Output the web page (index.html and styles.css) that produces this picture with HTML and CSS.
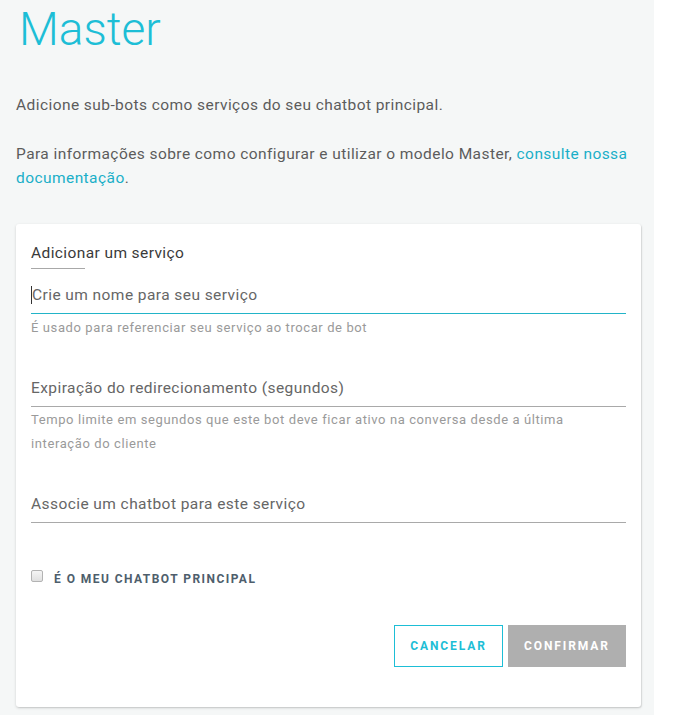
FILE: index.html
```html
<!DOCTYPE html>
<html lang="pt">
<head>
<meta charset="utf-8">
<link rel="stylesheet" href="styles.css">
</head>
<body>
<div class="page">
  <main class="content">
    <h1 class="title">Master</h1>
    <p class="intro">Adicione sub-bots como serviços do seu chatbot principal.</p>
    <p class="intro info">Para informações sobre como configurar e utilizar o modelo Master, <a href="#" class="link">consulte nossa documentação</a>.</p>
    <section class="card">
      <h2 class="card-title">Adicionar um serviço</h2>
      <div class="field f1 focused">
        <div class="input"><span class="caret"></span>Crie um nome para seu serviço</div>
        <p class="help">É usado para referenciar seu serviço ao trocar de bot</p>
      </div>
      <div class="field f2">
        <div class="input">Expiração do redirecionamento (segundos)</div>
        <p class="help">Tempo limite em segundos que este bot deve ficar ativo na conversa desde a última interação do cliente</p>
      </div>
      <div class="field f3">
        <div class="input">Associe um chatbot para este serviço</div>
      </div>
      <label class="check">
        <span class="box"></span>
        <span class="check-label">É O MEU CHATBOT PRINCIPAL</span>
      </label>
      <div class="actions">
        <button class="btn btn-outline">CANCELAR</button>
        <button class="btn btn-disabled">CONFIRMAR</button>
      </div>
    </section>
  </main>
  <aside class="gutter"></aside>
</div>
</body>
</html>
```
FILE: styles.css
```css
* { box-sizing: border-box; }
html, body { margin: 0; padding: 0; background: #ffffff; }
body { font-family: Roboto, "Liberation Sans", sans-serif; color: #5b5b5b; }
.page { display: flex; width: 677px; height: 715px; overflow: hidden; }
.content { width: 654px; flex: none; background: #f5f7f7; padding: 0 13px 0 16px; }
.gutter { flex: 1; background: #ffffff; }
.title { margin: 0; padding: 3px 0 0 3px; font-size: 46px; font-weight: 300; color: #1dbed6; line-height: 52px; }
.intro { margin: 38px 0 0; font-size: 15.5px; letter-spacing: 0.43px; line-height: 24px; color: #5c5c5c; }
.intro.info { margin-top: 25px; }
.link { color: #1aafc8; text-decoration: none; }
.card { margin-top: 34px; background: #fff; border-radius: 3px; box-shadow: 0 1px 3px rgba(0,0,0,0.16), 1px 1px 1px rgba(0,0,0,0.07); padding: 19px 15px 40px 15px; }
.card-title { margin: 0; font-size: 15.5px; letter-spacing: 0.4px; font-weight: 400; color: #3a3a3a; line-height: 20px; }
.card-title::after { content: ""; display: block; width: 54px; height: 1px; background: #a8a8a8; margin-top: 5px; }
.input { font-size: 15.5px; letter-spacing: 0.43px; color: #666; line-height: 20px; padding: 0 0 8px; border-bottom: 1px solid #a9a9a9; }
.focused .input { border-bottom-color: #22b4c8; }
.caret { display: inline-block; width: 1px; height: 18px; background: #333; vertical-align: -4px; }
.help { margin: 2px 0 0; max-width: 580px; font-size: 13px; letter-spacing: 0.6px; line-height: 24px; color: #9a9a9a; }
.f2 .help { margin-top: 1px; }
.f1 { margin-top: 16px; }
.f2 { margin-top: 38px; }
.f3 { margin-top: 38px; }
.check { display: flex; align-items: flex-start; gap: 11px; margin-top: 48px; }
.box { width: 12px; height: 12px; flex: none; border: 1px solid #b3b3b3; border-radius: 2px; background: linear-gradient(#f5f5f5, #e0e0e0); margin-top: -1px; }
.check-label { font-size: 12px; line-height: 16px; font-weight: 700; letter-spacing: 1.45px; color: #4e5e6c; }
.actions { display: flex; justify-content: flex-end; gap: 5px; margin-top: 38px; }
.btn { height: 42px; padding: 0; font-family: Roboto, "Liberation Sans", sans-serif; font-size: 12px; font-weight: 700; letter-spacing: 1.9px; border-radius: 0; cursor: pointer; }
.btn-outline { width: 109px; background: #fff; border: 1px solid #1dbed6; color: #1dbed6; }
.btn-disabled { width: 118px; background: #afafaf; border: none; color: #fff; }
```
